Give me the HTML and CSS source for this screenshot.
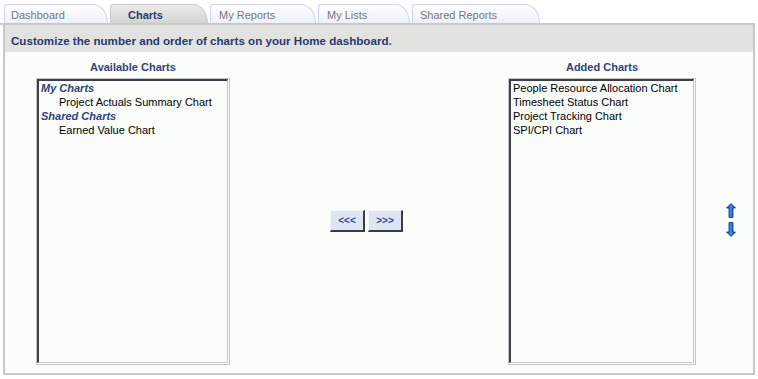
FILE: index.html
```html
<!DOCTYPE html>
<html>
<head>
<meta charset="utf-8">
<link rel="stylesheet" href="styles.css">
</head>
<body>
<div class="tabs">
  <div class="tab tab-dash">Dashboard</div>
  <div class="tab tab-charts active">Charts</div>
  <div class="tab tab-reports">My Reports</div>
  <div class="tab tab-lists">My Lists</div>
  <div class="tab tab-shared">Shared Reports</div>
</div>
<div class="panel">
  <div class="panel-head">Customize the number and order of charts on your Home dashboard.</div>
  <div class="panel-body">
    <div class="col col-left">
      <div class="col-title">Available Charts</div>
      <div class="listbox">
        <div class="listbox-inner">
          <div class="group">My Charts</div>
          <div class="item indent">Project Actuals Summary Chart</div>
          <div class="group">Shared Charts</div>
          <div class="item indent">Earned Value Chart</div>
        </div>
      </div>
    </div>
    <div class="mid">
      <button class="btn">&lt;&lt;&lt;</button>
      <button class="btn">&gt;&gt;&gt;</button>
    </div>
    <div class="col col-right">
      <div class="col-title">Added Charts</div>
      <div class="listbox">
        <div class="listbox-inner">
          <div class="item">People Resource Allocation Chart</div>
          <div class="item">Timesheet Status Chart</div>
          <div class="item">Project Tracking Chart</div>
          <div class="item">SPI/CPI Chart</div>
        </div>
      </div>
    </div>
    <div class="arrows">
      <svg class="arrow" width="10" height="15" viewBox="0 0 10 15">
        <defs>
          <linearGradient id="ag" x1="0" y1="0" x2="1" y2="0">
            <stop offset="0" stop-color="#0b3fae"/>
            <stop offset="0.45" stop-color="#3f8af0"/>
            <stop offset="1" stop-color="#0a3392"/>
          </linearGradient>
        </defs>
        <path d="M5 0.5 L9.5 5 L7 5 L7 14.5 L3 14.5 L3 5 L0.5 5 Z" fill="url(#ag)" stroke="#0a2c8a" stroke-width="0.8"/>
      </svg>
      <svg class="arrow" width="10" height="15" viewBox="0 0 10 15">
        <path d="M5 14.5 L9.5 10 L7 10 L7 0.5 L3 0.5 L3 10 L0.5 10 Z" fill="url(#ag)" stroke="#0a2c8a" stroke-width="0.8"/>
      </svg>
    </div>
  </div>
</div>
</body>
</html>
```

FILE: styles.css
```css
html, body {
  margin: 0;
  padding: 0;
  background: #ffffff;
  font-family: "Liberation Sans", Arial, sans-serif;
  font-size: 11px;
}

.tabs {
  display: flex;
  gap: 2px;
  padding: 4px 0 0 4px;
  height: 19px;
}

.tab {
  box-sizing: border-box;
  height: 19px;
  padding: 3px 0 0 7px;
  color: #777777;
  font-size: 11px;
  line-height: 14px;
  border: 1px solid #cdd3ee;
  border-bottom: none;
  border-radius: 3px 15px 0 0 / 3px 19px 0 0;
  background: linear-gradient(#ffffff, #eef0fb);
}

.tab-dash { width: 104px; padding-left: 6px; }
.tab-charts { width: 98px; }
.tab-reports { width: 106px; padding-left: 8px; }
.tab-lists { width: 92px; padding-left: 8px; }
.tab-shared { width: 128px; }

.tab.active {
  padding-left: 17px;
  color: #2b3a6d;
  font-weight: bold;
  border-color: #c9cac6;
  background: linear-gradient(#ebebe9, #d3d4d0);
}

.panel {
  box-sizing: border-box;
  width: 755px;
  height: 352px;
  border-top: 2px solid #c7c9c4;
  display: flex;
  flex-direction: column;
}

.panel-head {
  box-sizing: border-box;
  margin-left: 3px;
  width: 752px;
  height: 27px;
  padding: 9px 0 0 6px;
  border-left: 2px solid #c7c9c4;
  border-right: 2px solid #c7c9c4;
  background: #e2e3e0;
  color: #283a6c;
  font-weight: bold;
  font-size: 11.6px;
  line-height: 14px;
}

.panel-body {
  box-sizing: border-box;
  margin-left: 3px;
  width: 752px;
  flex: 1;
  border-left: 2px solid #c7c9c4;
  border-right: 2px solid #c7c9c4;
  border-bottom: 2px solid #c7c9c4;
  background: #fbfdfb;
  display: flex;
  align-items: stretch;
  padding: 8px 0 8px 31px;
}

.col {
  display: flex;
  flex-direction: column;
}

.col-left { width: 194px; }
.col-right { width: 188px; }

.col-title {
  text-align: center;
  color: #33427a;
  font-weight: bold;
  font-size: 11px;
  line-height: 14px;
  margin-bottom: 4px;
}

.listbox {
  flex: 1;
  border: 1px solid #c6c6c4;
  display: flex;
}

.listbox-inner {
  flex: 1;
  background: #fbfdfb;
  border-top: 2px solid #3e3e46;
  border-left: 2px solid #3e3e46;
  border-right: 1px solid #c6c6c4;
  border-bottom: 1px solid #c6c6c4;
  margin: 0 1px 1px 0;
  padding: 0 0 0 2px;
}

.item {
  color: #000;
  font-size: 11px;
  line-height: 14px;
  white-space: nowrap;
}

.item.indent { padding-left: 18px; }

.group {
  color: #2f3f80;
  font-weight: bold;
  font-style: italic;
  font-size: 11px;
  line-height: 14px;
}

.mid {
  width: 278px;
  display: flex;
  align-items: center;
  justify-content: center;
  gap: 3px;
  padding: 17px 5px 0 0;
  box-sizing: border-box;
}

.btn {
  box-sizing: border-box;
  width: 35px;
  height: 22px;
  padding: 0;
  background: #dee5f2;
  border-top: 1px solid #f4f6fb;
  border-left: 1px solid #f4f6fb;
  border-right: 2px solid #3c3c42;
  border-bottom: 2px solid #3c3c42;
  color: #2b4fa6;
  font-family: "Liberation Sans", Arial, sans-serif;
  font-size: 10px;
  font-weight: bold;
  line-height: 18px;
}

.arrows {
  width: 56px;
  display: flex;
  flex-direction: column;
  align-items: center;
  justify-content: center;
  gap: 4px;
  padding: 14px 0 0 14px;
  box-sizing: border-box;
}

.arrow { display: block; }
```
